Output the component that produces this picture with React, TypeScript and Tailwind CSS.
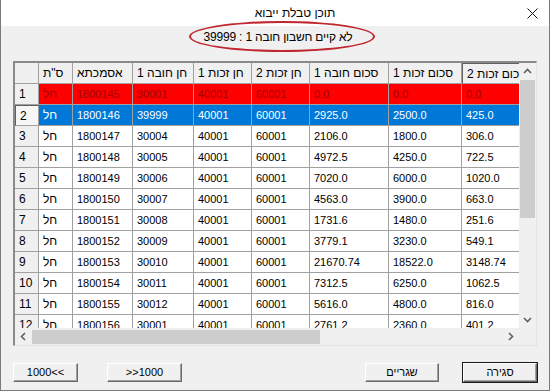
import React from 'react';

type Row = {
  n: string;
  cells: string[];
  tone?: 'red' | 'blue';
};

const colWidths = [
  'w-[34px]',
  'w-[60px]',
  'w-[61px]',
  'w-[58px]',
  'w-[58px]',
  'w-[79px]',
  'w-[73px]',
  'w-[73px]'
];

const headers = ['ס"ת', 'אסמכתא', 'חן חובה 1', 'חן זכות 1', 'חן זכות 2', 'סכום חובה 1', 'סכום זכות 1', 'סכום זכות 2'];

const rows: Row[] = [
  {n: '1', cells: ['חל', '1800145', '30001', '40001', '60001', '0.0', '0.0', '0.0'], tone: 'red'},
  {n: '2', cells: ['חל', '1800146', '39999', '40001', '60001', '2925.0', '2500.0', '425.0'], tone: 'blue'},
  {n: '3', cells: ['חל', '1800147', '30004', '40001', '60001', '2106.0', '1800.0', '306.0']},
  {n: '4', cells: ['חל', '1800148', '30005', '40001', '60001', '4972.5', '4250.0', '722.5']},
  {n: '5', cells: ['חל', '1800149', '30006', '40001', '60001', '7020.0', '6000.0', '1020.0']},
  {n: '6', cells: ['חל', '1800150', '30007', '40001', '60001', '4563.0', '3900.0', '663.0']},
  {n: '7', cells: ['חל', '1800151', '30008', '40001', '60001', '1731.6', '1480.0', '251.6']},
  {n: '8', cells: ['חל', '1800152', '30009', '40001', '60001', '3779.1', '3230.0', '549.1']},
  {n: '9', cells: ['חל', '1800153', '30010', '40001', '60001', '21670.74', '18522.0', '3148.74']},
  {n: '10', cells: ['חל', '1800154', '30011', '40001', '60001', '7312.5', '6250.0', '1062.5']},
  {n: '11', cells: ['חל', '1800155', '30012', '40001', '60001', '5616.0', '4800.0', '816.0']},
  {n: '12', cells: ['חל', '1800156', '30001', '40001', '60001', '2761.2', '2360.0', '401.2']}
];

function Arrow({dir}: {dir: 'up' | 'down' | 'left' | 'right'}) {
  const pts = {
    up: '1,6 4.5,2.5 8,6',
    down: '1,3 4.5,6.5 8,3',
    left: '6,1 2.5,4.5 6,8',
    right: '3,1 6.5,4.5 3,8'
  }[dir];
  return (
    <svg width="9" height="9" viewBox="0 0 9 9">
      <polyline points={pts} fill="none" stroke="#606060" strokeWidth="1.6" />
    </svg>
  );
}

function Grid() {
  return (
    <div className="mx-[12px] flex h-[285px] border-l-2 border-t-2 border-r border-b border-l-[#8a8a8a] border-t-[#8a8a8a] border-r-[#e3e3e3] border-b-[#e3e3e3] bg-[#f0f0f0]">
      <div className="flex min-w-0 flex-1 flex-col">
        <div className="flex-1 overflow-hidden bg-white">
          <div className="flex h-[21px] w-max text-[12px]">
            <div className="w-[24px] shrink-0 border-b border-r border-[#a0a0a0] bg-[#f0f0f0]" />
            {headers.map((h, i) => (
              <div
                key={h}
                className={`${colWidths[i]} shrink-0 overflow-hidden whitespace-nowrap border-b border-r border-[#a0a0a0] bg-[#f0f0f0] px-[4px] leading-[20px] ${
                  i === 7 ? 'border-l border-t border-l-[#606060] border-t-[#606060] px-[1px]' : ''
                }`}
              >
                {h}
              </div>
            ))}
          </div>
          {rows.map((r) => {
            const tone =
              r.tone === 'red'
                ? 'bg-[#ff0000] text-[#a00000]'
                : r.tone === 'blue'
                  ? 'bg-[#0078d7] text-white'
                  : 'bg-white text-black';
            return (
              <div key={r.n} className="flex h-[21px] w-max text-[11px]">
                <div
                  className={`w-[24px] shrink-0 border-b border-r border-[#a0a0a0] px-[4px] text-[12px] leading-[20px] text-black ${
                    r.tone === 'blue' ? 'border-l border-t border-l-[#606060] border-t-[#606060] bg-[#f7f7f7] px-[3px]' : 'bg-[#f0f0f0]'
                  }`}
                >
                  {r.n}
                </div>
                {r.cells.map((c, i) => (
                  <div
                    key={i}
                    className={`${colWidths[i]} shrink-0 overflow-hidden whitespace-nowrap border-b border-r border-[#a0a0a0] px-[4px] leading-[20px] ${tone} ${
                      i === 0 ? 'text-[12px]' : ''
                    }`}
                  >
                    {c}
                  </div>
                ))}
              </div>
            );
          })}
        </div>
        <div className="flex h-[17px] shrink-0 items-center bg-[#f0f0f0]">
          <div className="flex h-[17px] w-[17px] items-center justify-center">
            <Arrow dir="left" />
          </div>
          <div className="h-[14px] w-[288px] bg-[#cdcdcd]" />
          <div className="flex-1" />
          <div className="flex h-[17px] w-[17px] items-center justify-center">
            <Arrow dir="right" />
          </div>
        </div>
      </div>
      <div className="flex w-[17px] shrink-0 flex-col bg-[#f0f0f0]">
        <div className="flex h-[17px] items-center justify-center">
          <Arrow dir="up" />
        </div>
        <div className="mx-auto h-[138px] w-[15px] bg-[#cdcdcd]" />
        <div className="flex-1" />
        <div className="flex h-[17px] items-center justify-center">
          <Arrow dir="down" />
        </div>
        <div className="h-[17px]" />
      </div>
    </div>
  );
}

function Button({label, isDefault = false, className = ''}: {label: string; isDefault?: boolean; className?: string}) {
  return (
    <div className={`${isDefault ? 'border border-[#1a1a1a]' : 'border border-transparent'} ${className}`}>
      <div className="flex h-[19px] items-center justify-center border-b border-l border-r border-t border-b-[#696969] border-l-white border-r-[#696969] border-t-white bg-[#f0f0f0] text-[11px] text-black shadow-[inset_-1px_-1px_0_#a0a0a0]">
        {label}
      </div>
    </div>
  );
}

export default function App() {
  return (
    <div
      className="relative flex h-[391px] w-[550px] flex-col overflow-hidden border border-t-0 border-[#7a7a7a] bg-[#f0f0f0]"
      style={{fontFamily: '"Liberation Sans", Arial, sans-serif'}}
    >
      <div className="relative flex h-[26px] shrink-0 items-center justify-center bg-white text-[12px] text-black">
        <span dir="rtl" className="ml-[40px]">תוכן טבלת ייבוא</span>
        <svg className="absolute right-[11px] top-[8px]" width="11" height="11" viewBox="0 0 11 11">
          <path d="M0.5 0.5 L10.5 10.5 M10.5 0.5 L0.5 10.5" stroke="#111" strokeWidth="1" />
        </svg>
      </div>

      <div className="flex h-[35px] shrink-0 items-center justify-center pb-[14px] pl-[6px]">
        <span dir="rtl" className="text-[12px] tracking-[-0.2px] text-black">
          לא קיים חשבון חובה 1 : 39999
        </span>
      </div>

      <Grid />

      <div className="flex items-center px-[11px] pt-[16px]">
        <Button label="1000<<" className="w-[67px]" />
        <Button label=">>1000" className="ml-[27px] w-[77px]" />
        <div className="flex-1" />
        <Button label="שגריים" className="w-[76px]" />
        <Button label="סגירה" isDefault className="ml-[22px] w-[76px]" />
      </div>

      <div className="pointer-events-none absolute left-[188px] top-[21px] h-[31px] w-[186px] rounded-[50%] border-[2.5px] border-[#c0262e]" />
    </div>
  );
}
